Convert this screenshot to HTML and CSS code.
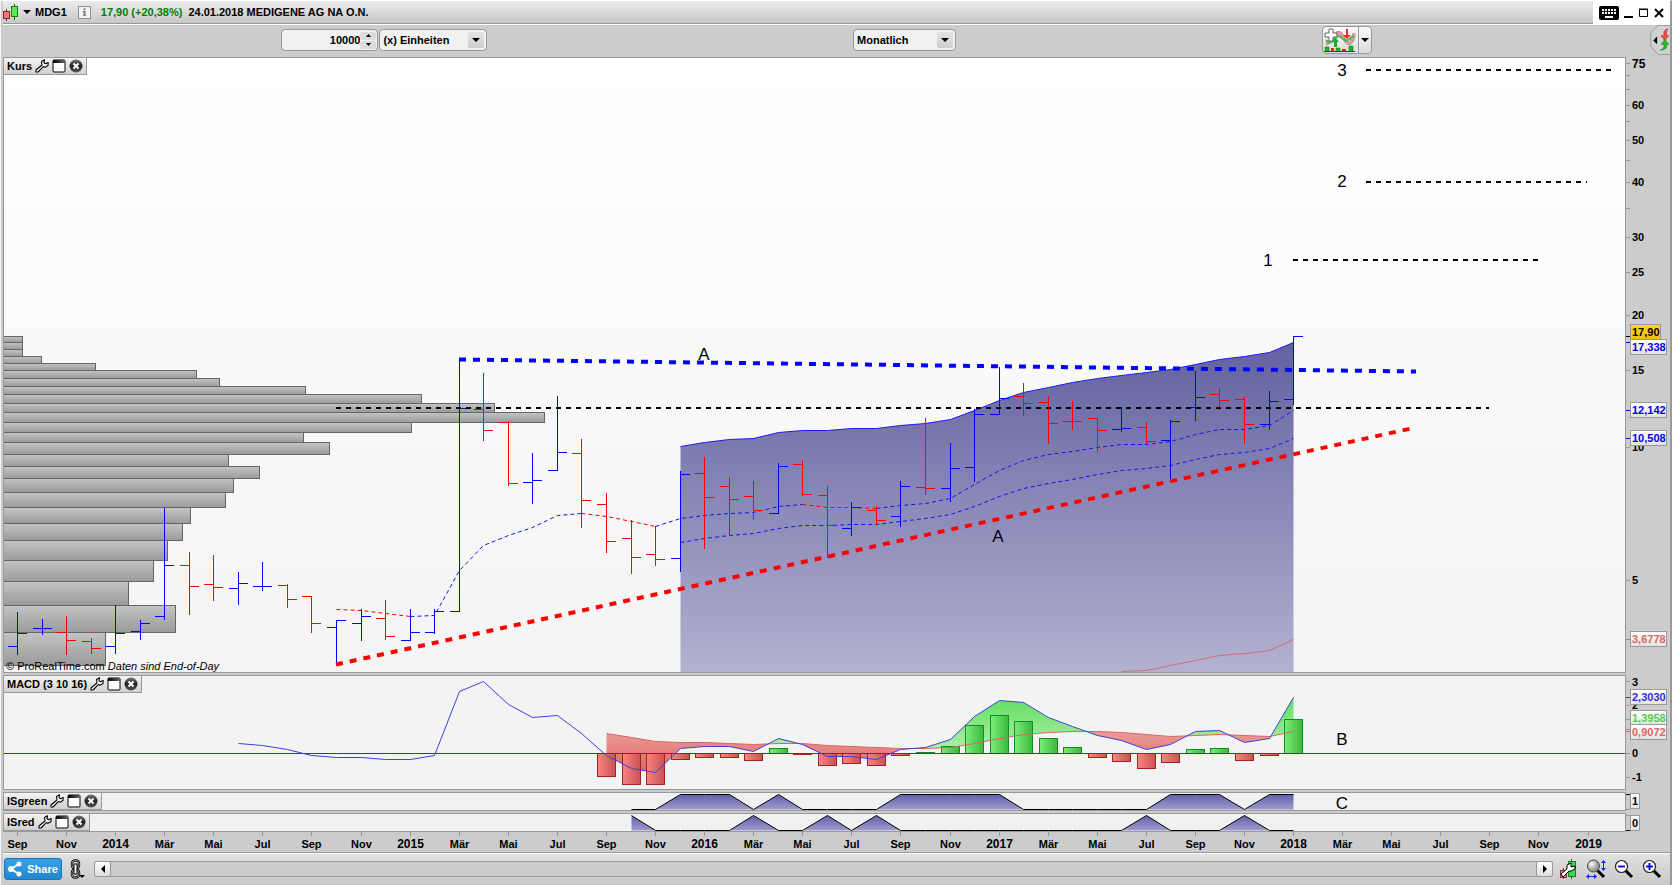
FILE: index.html
```html
<!DOCTYPE html>
<html lang="de">
<head>
<meta charset="UTF-8" />
<meta name="viewport" content="width=device-width, initial-scale=1" />
<title>MDG1 - MEDIGENE AG NA O.N.</title>
<link rel="stylesheet" href="styles.css">
</head>
<body>
  <!-- Shared icons -->
  <svg class="defs" aria-hidden="true">
    <symbol id="icon-wrench" viewBox="0 0 14 14">
      <path d="M1 11 L7 6 L6.500 2.500 L9.500 0.800 L9 3.800 L10.500 4.800 L13.200 3.500 L13 6.500 L10 8.300 L8.300 7.600 L3 13 L1 13 Z" fill="#fff" stroke="#000" stroke-width="1.100" stroke-linejoin="round"/>
    </symbol>
    <symbol id="icon-window" viewBox="0 0 14 14">
      <rect x="1" y="1" width="12" height="12" rx="1" fill="#fff" stroke="#000"/>
      <path d="M1 1h12v3H1z" fill="url(#bar-grad)"/>
    </symbol>
    <symbol id="icon-close" viewBox="0 0 14 14">
      <circle cx="7" cy="7" r="6.500" fill="url(#close-grad)"/>
      <path d="M4.500 4.500l5 5M9.500 4.500l-5 5" stroke="#fff" stroke-width="2"/>
    </symbol>
    <symbol id="icon-lens" viewBox="0 0 20 20">
      <path d="M11 11l7 7" stroke="#000" stroke-width="3"/>
      <circle cx="7.500" cy="7.500" r="6" fill="#fff" stroke="#222" stroke-width="1.200"/>
    </symbol>
    <linearGradient id="bar-grad"><stop offset="0" stop-color="#000"/><stop offset="1" stop-color="#666"/></linearGradient>
    <linearGradient id="close-grad" x2="0" y2="1"><stop offset="0" stop-color="#777"/><stop offset=".5" stop-color="#222"/><stop offset="1" stop-color="#555"/></linearGradient>
    <radialGradient id="ball-grad" cx=".35" cy=".35"><stop offset="0" stop-color="#fff"/><stop offset="1" stop-color="#999"/></radialGradient>
    <linearGradient id="price-fill" x2="0" y2="1"><stop offset="0" stop-color="#6361a0"/><stop offset="1" stop-color="#b2b2d0"/></linearGradient>
    <linearGradient id="profile-fill" x2="0" y2="1"><stop offset="0" stop-color="#c4c4c4"/><stop offset="1" stop-color="#9a9a9a"/></linearGradient>
    <linearGradient id="is-fill" x2="0" y2="1"><stop offset="0" stop-color="#6361ab"/><stop offset="1" stop-color="#9c9bcb"/></linearGradient>
    <linearGradient id="up-area" x2="0" y2="1"><stop offset="0" stop-color="#5ee05e"/><stop offset="1" stop-color="#b0ecaa"/></linearGradient>
    <linearGradient id="down-area" x2="0" y2="1"><stop offset="0" stop-color="#e99c98"/><stop offset="1" stop-color="#e06262"/></linearGradient>
    <linearGradient id="up-bar"><stop offset="0" stop-color="#78ee78"/><stop offset="1" stop-color="#3cb83c"/></linearGradient>
    <linearGradient id="down-bar"><stop offset="0" stop-color="#fc8484"/><stop offset="1" stop-color="#c65252"/></linearGradient>
    <linearGradient id="badge-fill" x2="0" y2="1"><stop offset="0" stop-color="#fff"/><stop offset="1" stop-color="#e2e2e2"/></linearGradient>
    <linearGradient id="last-fill" x2="0" y2="1"><stop offset="0" stop-color="#ffdc28"/><stop offset="1" stop-color="#f0bc10"/></linearGradient>
  </svg>

  <header class="titlebar">
    <div class="quote">
      <button class="plain symbol-menu" aria-label="Symbol">
        <svg width="16" height="18" viewBox="0 0 16 18" aria-hidden="true">
          <path d="M3.500 6v12M11.500 1v16" stroke="#444"/>
          <rect x=".5" y="8.500" width="6" height="7" fill="#f07878" stroke="#a02020"/>
          <rect x="8.500" y="3.500" width="6" height="10" fill="#5ce45c" stroke="#0a8a0a"/>
        </svg>
        <svg width="8" height="4" viewBox="0 0 8 4" aria-hidden="true"><path d="M0 0h8l-4 4z"/></svg>
        MDG1
      </button>
      <button class="info" aria-label="Info">
        <svg width="12" height="12" viewBox="0 0 12 12" aria-hidden="true"><path d="M5 2h2v2H5zM4 5h3v4h1v1H4V9h1V6H4z" fill="#777"/></svg>
      </button>
      <span class="change">17,90 (+20,38%)</span>
      <h1>24.01.2018 MEDIGENE AG NA O.N.</h1>
    </div>
    <div class="window-buttons">
      <button class="plain" aria-label="Tastatur">
        <svg width="20" height="14" viewBox="0 0 20 14" aria-hidden="true">
          <rect width="20" height="14" rx="2"/>
          <path d="M3 4h14M3 7h14" stroke="#fff" stroke-width="2" stroke-dasharray="2 1"/>
          <path d="M6 11h8" stroke="#fff" stroke-width="2"/>
        </svg>
      </button>
      <button class="plain" aria-label="Minimieren"><svg width="10" height="12" viewBox="0 0 10 12" aria-hidden="true"><path d="M0 9h9v2H0z"/></svg></button>
      <button class="plain" aria-label="Maximieren"><svg width="10" height="12" viewBox="0 0 10 12" aria-hidden="true"><path d="M.5 2.500h8v7h-8zM0 2h9" fill="none" stroke="#000"/></svg></button>
      <button class="plain" aria-label="Schliessen"><svg width="10" height="12" viewBox="0 0 10 12" aria-hidden="true"><path d="M1 2l8 8M9 2l-8 8" stroke="#000" stroke-width="2"/></svg></button>
    </div>
  </header>

  <div class="toolbar">
    <div class="units">
      <div class="field amount">
        <input type="text" value="10000" aria-label="Anzahl">
        <div class="spin">
          <button aria-label="Mehr"><svg width="5" height="3" viewBox="0 0 5 3" aria-hidden="true"><path d="M0 3h5L2.500 0z"/></svg></button>
          <button aria-label="Weniger"><svg width="5" height="3" viewBox="0 0 5 3" aria-hidden="true"><path d="M0 0h5L2.500 3z"/></svg></button>
        </div>
      </div>
      <div class="field unit">
        <select aria-label="Einheit"><option>(x) Einheiten</option><option>Tage</option></select>
        <svg class="caret" viewBox="0 0 16 16" aria-hidden="true"><path d="M4 6h8l-4 4z"/></svg>
      </div>
    </div>
    <div class="field period">
      <select aria-label="Zeiteinheit"><option>Monatlich</option><option>Wöchentlich</option></select>
      <svg class="caret" viewBox="0 0 16 16" aria-hidden="true"><path d="M4 6h8l-4 4z"/></svg>
    </div>
    <div class="split">
      <button aria-label="Indikator">
        <svg width="32" height="24" viewBox="0 0 32 24" aria-hidden="true">
          <path d="M2 16C9 14 12 2 16 5S22 18 26 15 30 8 30 5" fill="none" stroke="#777" stroke-width="3"/>
          <path d="M2 16C9 14 12 2 16 5S22 18 26 15 30 8 30 5" fill="none" stroke="#f5a0a0" stroke-width="2"/>
          <path d="M2 12C8 19 11 9 14 8S20 15 24 12 28 9 30 8" fill="none" stroke="#50b850" stroke-width="2"/>
          <path d="M5 1h4v4h4v4H9v4H5V9H1V5h4z" fill="#fff" stroke="#667"/>
          <path d="M24 1v6h3l-4 4-4-4h3V1z" fill="#f03030"/>
          <path d="M10 19v-5H8l3.500-4 3.500 4h-2v5z" fill="#0ab020"/>
          <path d="M1 23v-4h4v4M12 23v-3h4v3M25 23v-5h4v5" fill="#0cb81c" stroke="#087010" stroke-width=".5"/>
          <path d="M7 23v-3h3v3M18 23v-2h4v2" fill="#f02020"/>
          <path d="M0 23.500h31" stroke="#2030e0"/>
        </svg>
      </button>
      <button aria-label="Indikator-Liste"><svg width="8" height="4" viewBox="0 0 8 4" aria-hidden="true"><path d="M0 0h8l-4 4z"/></svg></button>
    </div>
    <button class="order-toggle" aria-label="Orders">
      <svg width="20" height="30" viewBox="0 0 20 31" aria-hidden="true">
        <path d="M20 .5H8L.5 8v14L8 30.500h12" fill="#d2d2d2" stroke="#999"/>
        <path d="M7 12v8l-4-4z"/>
        <path d="M18 4q-5 1-4 7h-3l4 5 4-5h-2q-1-4 1-7z" fill="#f04848" stroke="#b02020" stroke-width=".5"/>
        <path d="M10 26q5-1 4-6h-3l4-5 4 5h-2q1 6-7 6z" fill="#20b830" stroke="#0a7a16" stroke-width=".5"/>
      </svg>
    </button>
  </div>

  <main class="charts">
    <section class="row price">
      <div class="panel">
        <svg id="price-chart" class="plot" role="img" aria-label="Kurs"></svg>
        <div class="tab">
          <span>Kurs</span>
          <button class="plain" aria-label="Einstellungen"><svg><use href="#icon-wrench"/></svg></button>
          <button class="plain" aria-label="Fenster"><svg><use href="#icon-window"/></svg></button>
          <button class="plain" aria-label="Entfernen"><svg><use href="#icon-close"/></svg></button>
        </div>
        <p class="source">© ProRealTime.com <i>Daten sind End-of-Day</i></p>
      </div>
      <svg id="price-axis" class="axis"></svg>
    </section>

    <section class="row macd">
      <div class="panel">
        <svg id="macd-chart" class="plot" role="img" aria-label="MACD"></svg>
        <div class="tab">
          <span>MACD (3 10 16)</span>
          <button class="plain" aria-label="Einstellungen"><svg><use href="#icon-wrench"/></svg></button>
          <button class="plain" aria-label="Fenster"><svg><use href="#icon-window"/></svg></button>
          <button class="plain" aria-label="Entfernen"><svg><use href="#icon-close"/></svg></button>
        </div>
      </div>
      <svg id="macd-axis" class="axis"></svg>
    </section>

    <section class="row signal">
      <div class="panel">
        <svg id="green-chart" class="plot" role="img" aria-label="ISgreen"></svg>
        <div class="tab">
          <span>ISgreen</span>
          <button class="plain" aria-label="Einstellungen"><svg><use href="#icon-wrench"/></svg></button>
          <button class="plain" aria-label="Fenster"><svg><use href="#icon-window"/></svg></button>
          <button class="plain" aria-label="Entfernen"><svg><use href="#icon-close"/></svg></button>
        </div>
      </div>
      <svg id="green-axis" class="axis"></svg>
    </section>

    <section class="row signal last">
      <div class="panel">
        <svg id="red-chart" class="plot" role="img" aria-label="ISred"></svg>
        <div class="tab">
          <span>ISred</span>
          <button class="plain" aria-label="Einstellungen"><svg><use href="#icon-wrench"/></svg></button>
          <button class="plain" aria-label="Fenster"><svg><use href="#icon-window"/></svg></button>
          <button class="plain" aria-label="Entfernen"><svg><use href="#icon-close"/></svg></button>
        </div>
      </div>
      <svg id="red-axis" class="axis"></svg>
    </section>

    <div class="time"><svg id="time-axis"></svg></div>
  </main>

  <footer class="bottombar">
    <button class="share">
      <svg width="14" height="16" viewBox="0 0 14 16" aria-hidden="true">
        <path d="M11 3L3 8l8 5" fill="none" stroke="#fff" stroke-width="2"/>
        <circle cx="11" cy="3" r="2.500" fill="#fff"/><circle cx="3" cy="8" r="3" fill="#fff"/><circle cx="11" cy="13" r="2.500" fill="#fff"/>
      </svg>
      Share
    </button>
    <button class="plain link" aria-label="Verknüpfen">
      <svg width="16" height="20" viewBox="0 0 16 20" aria-hidden="true">
        <rect x="2" y="1.500" width="7" height="8" rx="3" fill="none" stroke="#000" stroke-width="2.400"/>
        <rect x="2" y="10.500" width="7" height="8" rx="3" fill="none" stroke="#000" stroke-width="2.400"/>
        <rect x="2" y="1.500" width="7" height="8" rx="3" fill="none" stroke="#fff" stroke-width=".6"/>
        <rect x="2" y="10.500" width="7" height="8" rx="3" fill="none" stroke="#fff" stroke-width=".6"/>
        <path d="M4 5h3v10H4z" fill="#fff" stroke="#000"/>
        <path d="M9 16h6l-3 3z"/>
      </svg>
    </button>
    <div class="scroll">
      <button aria-label="Zurück"><svg width="4" height="8" viewBox="0 0 4 8" aria-hidden="true"><path d="M4 0v8L0 4z"/></svg></button>
      <button aria-label="Vor"><svg width="4" height="8" viewBox="0 0 4 8" aria-hidden="true"><path d="M0 0v8l4-4z"/></svg></button>
    </div>
    <div class="tools">
      <button class="plain" aria-label="Chart-Einstellungen">
        <svg viewBox="0 0 20 20" aria-hidden="true">
          <path d="M5.500 9v11M13.500 0v20" stroke="#444"/>
          <rect x="2.500" y="11.500" width="6" height="7" fill="#e87070" stroke="#903030"/>
          <rect x="10.500" y="2.500" width="7" height="15" fill="#40d850" stroke="#207828"/>
          <path d="M3 15L9 10V6l4-2v4l4-1v3l-4 2h-2l-6 6z" fill="#fff" stroke="#000"/>
        </svg>
      </button>
      <button class="plain" aria-label="Automatischer Zoom">
        <svg viewBox="0 0 20 20" aria-hidden="true">
          <path d="M11 11l7 7" stroke="#000" stroke-width="3"/>
          <circle cx="7.500" cy="7" r="6" fill="url(#ball-grad)" stroke="#444"/>
          <path d="M17.500 2v9M1 17.500h9" stroke="#1020ff"/>
          <path d="M15 4l2.500-3L20 4zM15 9l2.500 3L20 9zM3 15l-3 2.500L3 20zM8 15l3 2.500L8 20z" fill="#1020ff"/>
        </svg>
      </button>
      <button class="plain" aria-label="Verkleinern">
        <svg viewBox="0 0 20 20" aria-hidden="true"><use href="#icon-lens"/><path d="M4 7.500h7" stroke="#1010e0" stroke-width="2"/></svg>
      </button>
      <button class="plain" aria-label="Vergrößern">
        <svg viewBox="0 0 20 20" aria-hidden="true"><use href="#icon-lens"/><path d="M4 7.500h7M7.500 4v7" stroke="#1010e0" stroke-width="2"/></svg>
      </button>
    </div>
  </footer>

<script src="script.js"></script>
</body>
</html>
```
FILE: styles.css
```css
/* Reset */
* {
  box-sizing: border-box;
}

body {
  margin: 0;
  padding-left: 2px;
  min-width: 900px;
  height: 100vh;
  display: flex;
  flex-direction: column;
  border-top: 1px solid #fff;
  border-left: 1px solid #f4f4f4;
  border-right: 2px solid #999;
  background: #ccc;
  color: #000;
  font: bold 11px/14px "Liberation Sans", Arial, sans-serif;
  overflow: hidden;
}

button,
input,
select {
  font: inherit;
  color: inherit;
  margin: 0;
  padding: 0;
}

button {
  display: flex;
  align-items: center;
  justify-content: center;
  border: 0;
  cursor: pointer;
}

svg {
  display: block;
}

.defs {
  position: absolute;
  width: 0;
  height: 0;
}

.plain {
  background: none;
}

/* Title bar */
.titlebar {
  display: flex;
  height: 24px;
  flex-shrink: 0;
  border-bottom: 1px solid #fff;
}

.quote {
  flex-grow: 1;
  display: flex;
  align-items: center;
  border-bottom: 1px solid #999;
  background: linear-gradient(#ececec, #c8c8c8);
}

.symbol-menu {
  gap: 4px;
}

.info {
  width: 13px;
  height: 13px;
  margin: 0 10px 0 11px;
  border: 1px solid #8a9099;
  background: #f4f4f4;
}

.change {
  color: #008000;
}

h1 {
  margin: 0 0 0 6px;
  font-size: 11px;
}

.window-buttons {
  width: 77px;
  padding-left: 6px;
  display: flex;
  gap: 5px;
  background: #fff;
}

/* Toolbar */
.toolbar {
  height: 32px;
  flex-shrink: 0;
  display: grid;
  grid-template-columns: 571fr 468fr 328fr 20px;
  padding: 0 0 2px 16.7%;
  align-items: center;
}

.units {
  display: flex;
  gap: 1px;
}

.field {
  height: 22px;
  display: flex;
  align-items: center;
  border: 1px solid #999;
  border-radius: 4px;
  background: #f1f1f1;
}

.amount {
  width: 97px;
}

.amount input {
  width: 100%;
  min-width: 0;
  border: 0;
  background: none;
  text-align: right;
}

.spin {
  width: 16px;
  flex-shrink: 0;
  display: grid;
  gap: 1px;
  margin-right: 1px;
}

.spin button {
  height: 8px;
  background: #dcdcdc;
  border-radius: 2px;
}

.unit {
  width: 108px;
}

.period {
  width: 103px;
}

.unit,
.period {
  display: grid;
  padding: 0 2px;
}

.field select {
  grid-area: 1 / 1;
  width: 100%;
  height: 20px;
  padding-left: 1px;
  border: 0;
  background: none;
  appearance: none;
}

.caret {
  grid-area: 1 / 1;
  justify-self: end;
  width: 16px;
  height: 16px;
  border-radius: 2px;
  background: linear-gradient(#e4e4e4, #cecece);
  pointer-events: none;
}

.split {
  width: 50px;
  height: 28px;
  display: flex;
  border: 1px solid #999;
  border-radius: 4px;
  background: linear-gradient(#fafafa, #dcdcdc);
}

.split button {
  background: none;
  flex-grow: 1;
}

.split button + button {
  border-left: 1px solid #999;
}

.order-toggle {
  background: none;
}

/* Charts */
.charts {
  flex-grow: 1;
  min-height: 0;
  display: flex;
  flex-direction: column;
}

.row {
  display: grid;
  grid-template: minmax(0, 1fr) / minmax(0, 1fr) 44px;
  flex-shrink: 0;
  margin-bottom: 2px;
}

.price {
  flex: 1 1 0;
  min-height: 0;
}

.macd {
  height: 115px;
}

.signal {
  height: 19px;
}

.last {
  margin-bottom: 0;
}

.panel {
  position: relative;
  min-height: 0;
  border: 1px solid #999;
  background: #f1f1f1;
}

.price .panel {
  background: linear-gradient(#fff, #f4f4f4);
}

.macd .panel {
  background: #f3f3f3;
}

.plot,
.axis,
#time-axis {
  width: 100%;
  height: 100%;
}

.plot {
  position: absolute;
  inset: 0;
}

.axis {
  overflow: visible;
}

.tab {
  position: absolute;
  top: 0;
  left: 0;
  height: 17px;
  display: flex;
  align-items: center;
  gap: 3px;
  padding: 0 3px;
  border: solid #999;
  border-width: 0 1px 1px 0;
  background: linear-gradient(#f4f4f4, #d0d0d0);
}

.tab svg {
  width: 14px;
  height: 14px;
}

.source {
  position: absolute;
  left: 2px;
  bottom: 0;
  margin: 0;
  font-weight: normal;
  line-height: 12px;
}

.time {
  height: 20px;
  padding-right: 44px;
  flex-shrink: 0;
}

#time-axis {
  overflow: visible;
}

/* Chart text */
.label {
  font-size: 11px;
}

.label-big {
  font-size: 12px;
}

.note {
  font-size: 17px;
  font-weight: normal;
  text-anchor: middle;
}

.mid {
  text-anchor: middle;
}

/* Bottom bar */
.bottombar {
  height: 33px;
  flex-shrink: 0;
  display: flex;
  align-items: center;
  padding: 0 8px 0 1px;
  border-top: 1px solid #999;
  box-shadow: inset 0 1px #fff;
  background: linear-gradient(#e2e2e2, #c8c8c8);
}

.share {
  width: 58px;
  height: 22px;
  gap: 5px;
  border: 1px solid #1a76b8;
  border-radius: 3px;
  background: linear-gradient(#38a2e8, #2088d0);
  color: #fff;
}

.link {
  width: 32px;
}

.scroll {
  flex-grow: 1;
  display: flex;
  justify-content: space-between;
  height: 16px;
  border: 1px solid #999;
  border-radius: 3px;
  background: #ccc;
}

.scroll button {
  width: 15px;
  border-radius: 2px;
  background: linear-gradient(#fff, #ddd);
  box-shadow: 0 0 0 1px #999;
}

.tools {
  display: flex;
  gap: 8px;
  padding-left: 5px;
}

.tools svg {
  width: 20px;
  height: 20px;
}
```
FILE: script.js
```js
(() => {
  const NS = 'http://www.w3.org/2000/svg';
  const WIDTH = 1621;
  const COUNT = 65;
  const BLUE = '#0000ff';
  const RED = '#ff0000';

  // Monthly bars from Sep 2013: high, low, open, close (chart units from the top)
  const bars = [
    [612, 655, 646, 633], [619, 635, 628, 628], [616, 655, 632, 640], [638, 654, 641, 648],
    [605, 654, 646, 633], [620, 640, 631, 623], [508, 620, 616, 565], [552, 615, 565, 586],
    [555, 601, 584, 587], [572, 605, 588, 583], [562, 591, 586, 586], [584, 608, 585, 599],
    [596, 633, 596, 623], [620, 665, 627, 620], [609, 641, 623, 616], [600, 640, 618, 636],
    [609, 641, 640, 632], [609, 634, 632, 611], [359, 612, 611, 408], [373, 441, 409, 430],
    [421, 486, 422, 483], [453, 504, 482, 480], [396, 471, 470, 452], [439, 528, 453, 500],
    [493, 553, 504, 541], [520, 574, 538, 557], [526, 566, 554, 559], [471, 572, 558, 474],
    [457, 549, 473, 497], [477, 535, 486, 499], [481, 520, 496, 510], [463, 514, 513, 466],
    [460, 496, 464, 494], [486, 558, 495, 525], [502, 536, 528, 507], [506, 525, 510, 520],
    [481, 527, 516, 486], [418, 495, 487, 488], [443, 502, 488, 468], [409, 482, 467, 414],
    [367, 415, 414, 398], [383, 416, 396, 403], [396, 444, 402, 423], [401, 430, 421, 421],
    [418, 452, 418, 430], [407, 432, 429, 428], [422, 444, 427, 441], [420, 479, 440, 421],
    [371, 421, 407, 397], [388, 410, 394, 400], [397, 444, 399, 424], [391, 430, 424, 401],
    [336, 405, 399, 336]
  ];
  const flatRed = [43];

  // Volume profile
  const levels = [336, 342, 349, 356, 363, 370, 378, 386, 394, 403, 412, 422, 432, 442, 454, 466, 478, 492, 507, 523, 540, 560, 581, 605, 632, 665];
  const volumes = [19, 19, 19, 38, 92, 193, 216, 302, 418, 491, 541, 408, 300, 326, 225, 256, 230, 222, 187, 179, 164, 150, 125, 172, 102];

  // Averages and bands, first value at the given month
  const upper = { from: 27, y: [446, 442, 439, 438, 432, 430, 430, 428, 428, 425, 423, 419, 410, 400, 392, 387, 382, 378, 375, 372, 369, 364, 359, 356, 352, 342] };
  const lower = { from: 45, y: [671, 670, 665, 660, 655, 653, 650, 639] };
  const fast = { from: 13, y: [609, 610, 613, 616, 615, 570, 545, 535, 527, 515, 513, 516, 521, 526, 518, 515, 513, 512, 506, 504, 507, 507, 508, 505, 503, 498, 484, 470, 460, 454, 451, 447, 444, 444, 441, 434, 429, 429, 425, 410] };
  const slow = { from: 27, y: [542, 538, 535, 533, 528, 525, 525, 524, 524, 521, 518, 514, 506, 496, 488, 483, 479, 474, 470, 468, 465, 459, 454, 452, 448, 438] };

  const macd = { from: 9, y: [743, 745, 749, 755, 757, 757, 759, 759, 755, 691, 681, 704, 717, 715, 733, 755, 768, 772, 748, 746, 746, 751, 738, 744, 756, 756, 759, 749, 747, 739, 716, 700, 702, 717, 726, 735, 740, 749, 744, 731, 730, 742, 738, 697] };
  const trigger = { from: 24, y: [733, 737, 741, 742, 742, 743, 744, 743, 743, 745, 746, 747, 748, 748, 747, 743, 738, 734, 732, 731, 731, 732, 734, 736, 735, 734, 735, 736, 731] };
  const histogram = { from: 24, y: [776, 784, 784, 759, 757, 757, 760, 748, 754, 765, 763, 765, 755, 752, 746, 725, 715, 721, 738, 747, 757, 761, 768, 762, 749, 748, 760, 755, 719] };

  const isGreen = [0, 0, 1, 1, 1, 0, 1, 0, 0, 0, 0, 1, 1, 1, 1, 1, 0, 0, 0, 0, 0, 0, 1, 1, 1, 0, 1, 1];
  const isRed = [1, 0, 0, 0, 0, 1, 0, 0, 1, 0, 1, 0, 0, 0, 0, 0, 0, 0, 0, 0, 0, 1, 0, 0, 0, 1, 0, 0];

  // Drawing surface that scales positions, not strokes or text
  function surface(id, top, height, width) {
    const svg = document.getElementById(id);
    svg.innerHTML = '';
    const box = svg.getBoundingClientRect();
    const kx = width ? box.width / width : 1;
    const ky = box.height / height;
    const add = (name, attrs, text) => {
      const el = document.createElementNS(NS, name);
      Object.entries(attrs).forEach(([key, value]) => el.setAttribute(key, value));
      if (text !== undefined) el.textContent = text;
      svg.appendChild(el);
      return el;
    };
    const x = value => value * kx;
    const y = value => (value - top) * ky;
    return {
      add, x, y,
      month: i => Math.floor(x(13.5 + i * 24.54)) + 0.5,
      line(x1, y1, x2, y2, color, extra = {}) {
        add('line', { x1, y1, x2, y2, stroke: color, ...extra });
      },
      text(tx, ty, value, cls, fill = '#000') {
        add('text', { x: tx, y: ty, class: cls, fill }, value);
      }
    };
  }

  const crisp = { 'shape-rendering': 'crispEdges' };

  function points(s, series) {
    return series.y.map((v, i) => [s.month(series.from + i), s.y(v) + 0.5]);
  }

  function drawPrice() {
    const s = surface('price-chart', 58, 614, WIDTH);

    volumes.forEach((w, i) => {
      s.add('rect', {
        x: -1, y: Math.round(s.y(levels[i])) + 0.5,
        width: Math.round(s.x(w)) + 0.5, height: Math.round(s.y(levels[i + 1])) - Math.round(s.y(levels[i])),
        fill: 'url(#profile-fill)', stroke: '#666', ...crisp
      });
    });

    // Band
    const top = points(s, upper);
    const end = s.month(52);
    s.add('polygon', {
      points: [...top, [end, s.y(672)], [s.month(27), s.y(672)]].join(' '),
      fill: 'url(#price-fill)'
    });
    s.add('polyline', { points: top.join(' '), fill: 'none', stroke: '#1c1cf0' });
    s.add('polyline', { points: points(s, lower).join(' '), fill: 'none', stroke: '#d86a78' });
    s.add('polyline', { points: points(s, slow).join(' '), fill: 'none', stroke: '#1414ee', 'stroke-dasharray': '4 3' });

    // Fast average is red while it falls
    const avg = points(s, fast);
    let run = [avg[0]];
    let falling = avg[1][1] > avg[0][1];
    const flush = () => s.add('polyline', {
      points: run.join(' '), fill: 'none', stroke: falling ? RED : '#1414ee', 'stroke-dasharray': '4 3'
    });
    for (let i = 1; i < avg.length; i++) {
      const dy = avg[i][1] - avg[i - 1][1];
      if (Math.abs(dy) > 0.5 && dy > 0 !== falling) {
        flush();
        run = [avg[i - 1]];
        falling = dy > 0;
      }
      run.push(avg[i]);
    }
    flush();

    bars.forEach(([high, low, open, close], i) => {
      const x = s.month(i);
      const color = close > open || flatRed.includes(i) ? RED : BLUE;
      const oy = Math.floor(s.y(open)) + 0.5;
      const cy = Math.floor(s.y(close)) + 0.5;
      s.line(x, s.y(high), x, s.y(low), color, crisp);
      s.line(x - 9.5, oy, x, oy, color, crisp);
      s.line(x, cy, x + 9.5, cy, color, crisp);
    });

    // Trend lines and targets
    const thick = { 'stroke-width': 4, 'stroke-dasharray': '7 7' };
    const dashed = { 'stroke-width': 2, 'stroke-dasharray': '5 5' };
    s.line(s.x(455), s.y(359.5), s.x(1412), s.y(371.5), BLUE, thick);
    s.line(s.x(332), s.y(664.5), s.x(1407), s.y(428.5), RED, thick);
    s.line(s.x(332), s.y(408), s.x(1485), s.y(408), '#000', dashed);
    s.line(s.x(1362), s.y(70), s.x(1607), s.y(70), '#000', dashed);
    s.line(s.x(1362), s.y(182), s.x(1583), s.y(182), '#000', dashed);
    s.line(s.x(1289), s.y(260), s.x(1534), s.y(260), '#000', dashed);

    [[700, 360, 'A'], [994, 542, 'A'], [1264, 266, '1'], [1338, 187, '2'], [1338, 76, '3']].forEach(([x, y, t]) => {
      s.text(s.x(x), s.y(y), t, 'note');
    });
  }

  function drawMacd() {
    const s = surface('macd-chart', 676, 113, WIDTH);
    const line = points(s, macd);
    const sig = points(s, trigger);
    const recent = line.slice(trigger.from - macd.from);

    // Area between both lines, split where they cross
    const areas = { up: '', down: '' };
    for (let i = 1; i < sig.length; i++) {
      const [x0, a0] = recent[i - 1];
      const [x1, a1] = recent[i];
      const b0 = sig[i - 1][1];
      const b1 = sig[i][1];
      const d0 = b0 - a0;
      const d1 = b1 - a1;
      if (d0 * d1 < 0) {
        const t = d0 / (d0 - d1);
        const cx = x0 + (x1 - x0) * t;
        const cy = a0 + (a1 - a0) * t;
        areas[d0 > 0 ? 'up' : 'down'] += `M${x0} ${a0}L${cx} ${cy}L${x0} ${b0}Z`;
        areas[d1 > 0 ? 'up' : 'down'] += `M${cx} ${cy}L${x1} ${a1}L${x1} ${b1}Z`;
      } else {
        areas[d0 + d1 > 0 ? 'up' : 'down'] += `M${x0} ${a0}L${x1} ${a1}L${x1} ${b1}L${x0} ${b0}Z`;
      }
    }
    s.add('path', { d: areas.up, fill: 'url(#up-area)' });
    s.add('path', { d: areas.down, fill: 'url(#down-area)' });

    const zero = Math.round(s.y(753)) + 0.5;
    histogram.y.forEach((v, i) => {
      const x = s.month(histogram.from + i);
      const y = Math.round(s.y(v)) + 0.5;
      const up = y < zero;
      s.add('rect', {
        x: x - 9, y: Math.min(y, zero), width: 18, height: Math.abs(y - zero),
        fill: up ? 'url(#up-bar)' : 'url(#down-bar)', stroke: up ? '#0f8f1c' : '#a02222', ...crisp
      });
    });

    s.add('polyline', { points: sig.join(' '), fill: 'none', stroke: '#dc6464' });
    s.line(0, zero, s.x(WIDTH), zero, '#3030d8', crisp);
    s.add('polyline', { points: line.join(' '), fill: 'none', stroke: '#4040dc' });
    s.text(s.x(1338), s.y(745), 'B', 'note');
  }

  function drawSignal(id, values, note) {
    const s = surface(id, 0, 17, WIDTH);
    const pts = values.map((v, i) => [s.month(25 + i), v ? 1.5 : 16.5]);
    s.add('polygon', {
      points: [...pts, [s.month(52), 16.5], [s.month(25), 16.5]].join(' '), fill: 'url(#is-fill)'
    });
    s.add('polyline', { points: pts.join(' '), fill: 'none', stroke: '#000' });
    if (note) s.text(s.x(1338), 16, note, 'note');
  }

  function tick(s, y, color = '#999') {
    const ty = Math.round(s.y(y)) + 0.5;
    s.line(0, ty, 4, ty, color, crisp);
  }

  function badge(s, y, value, color, width = 36, fill = 'url(#badge-fill)') {
    const top = Math.round(s.y(y)) + 0.5;
    s.add('rect', { x: 4.5, y: top, width, height: 15, fill, stroke: '#999' });
    s.text(6, top + 11.5, value, 'label', color);
  }

  function drawAxes() {
    const p = surface('price-axis', 57, 616);
    [63, 75, 89, 105, 121, 140, 160, 182, 208, 237, 272, 315, 370, 447, 580].forEach(y => tick(p, y));
    p.text(6, p.y(64) + 4, '75', 'label-big');
    [[105, 60], [140, 50], [182, 40], [237, 30], [272, 25], [315, 20], [370, 15], [447, 10], [580, 5]].forEach(([y, v]) => {
      p.text(6, p.y(y) + 4, v, 'label');
    });
    tick(p, 336, '#000');
    tick(p, 342, BLUE);
    tick(p, 410, BLUE);
    tick(p, 438, BLUE);
    tick(p, 639, '#e06464');
    badge(p, 339, '17,338', BLUE);
    badge(p, 324, '17,90', '#000', 30, 'url(#last-fill)');
    badge(p, 402, '12,142', BLUE);
    badge(p, 430, '10,508', BLUE);
    badge(p, 631, '3,6778', '#e06464');

    const m = surface('macd-axis', 675, 115);
    [681, 705, 729, 753, 777].forEach(y => tick(m, y));
    [[682, 3], [705, 2], [753, 0], [777, -1]].forEach(([y, v]) => m.text(6, m.y(y) + 4, v, 'label'));
    tick(m, 697, '#3030d8');
    tick(m, 719, '#50d050');
    tick(m, 731, '#e06464');
    badge(m, 689, '2,3030', '#3030d8');
    badge(m, 710, '1,3958', '#50d050');
    badge(m, 724, '0,9072', '#e06464');

    const g = surface('green-axis', 792, 19);
    tick(g, 794, '#000');
    tick(g, 809);
    badge(g, 793, '1', '#000', 9);

    const r = surface('red-axis', 813, 19);
    tick(r, 815);
    tick(r, 830, '#000');
    badge(r, 815, '0', '#000', 9);
  }

  function drawTime() {
    const s = surface('time-axis', 0, 20, WIDTH + 2);
    const names = ['Sep', 'Nov', '', 'Mär', 'Mai', 'Jul'];
    for (let i = 0; i < COUNT; i += 2) {
      const x = s.month(i) + 1;
      const name = names[(i / 2) % 6];
      s.line(x, 0, x, 4, '#999', crisp);
      s.text(x, 16, name || 2014 + Math.floor(i / 12), name ? 'label mid' : 'label-big mid');
    }
  }

  function render() {
    drawPrice();
    drawMacd();
    drawSignal('green-chart', isGreen, 'C');
    drawSignal('red-chart', isRed);
    drawAxes();
    drawTime();
  }

  window.addEventListener('resize', render);
  render();
})();
```
